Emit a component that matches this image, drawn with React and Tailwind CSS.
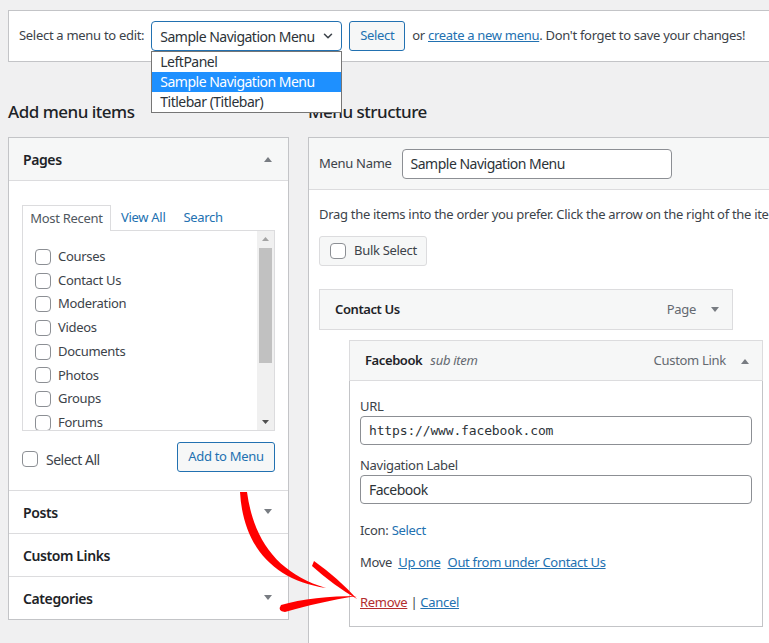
import React from "react";

const Tri = ({ up = false, className = "" }) => (
  <svg width="10" height="6" viewBox="0 0 10 6" className={className}>
    {up ? <polygon points="1,6 9,6 5,1" fill="#787c82" /> : <polygon points="1,0 9,0 5,5" fill="#787c82" />}
  </svg>
);

const Box = ({ className = "" }) => (
  <span className={"inline-block w-4 h-4 rounded-[4px] border border-[#8c8f94] bg-white shrink-0 " + className} />
);

const pages = ["Courses", "Contact Us", "Moderation", "Videos", "Documents", "Photos", "Groups", "Forums"];

export default function App() {
  return (
    <div className="relative w-[769px] h-[643px] overflow-hidden bg-[#f0f0f1] pt-[10px] pl-[8px] text-[13px] tracking-[-0.3px] text-[#3c434a] font-['Noto_Sans',sans-serif]">
      {/* top bar */}
      <div className="relative w-[900px] h-[52px] bg-white border border-[#c3c4c7] flex items-center pl-[10px] text-[13px]">
        <span className="mr-[7px]">Select a menu to edit:</span>
        <div className="relative">
          <div className="w-[191px] h-[30px] border border-[#2271b1] rounded-[4px] flex items-center pl-[8px] pr-[6px] justify-between text-[14px] tracking-[-0.5px] text-[#2c3338] whitespace-nowrap">
            <span>Sample Navigation Menu</span>
            <svg width="14" height="14" viewBox="0 0 24 24" fill="none" stroke="#3c434a" strokeWidth="2.6" strokeLinecap="round" strokeLinejoin="round"><path d="m6 9 6 6 6-6" /></svg>
          </div>
          <div className="absolute left-0 top-[30px] w-[191px] bg-white border border-[#767676] z-10 text-[14px] tracking-[-0.5px] text-[#2c3338] leading-[20px] whitespace-nowrap">
            <div className="pl-[8px] h-[20px]">LeftPanel</div>
            <div className="pl-[8px] h-[20px] bg-[#1e90ff] text-white">Sample Navigation Menu</div>
            <div className="pl-[8px] h-[20px]">Titlebar (Titlebar)</div>
          </div>
        </div>
        <div className="ml-[7px] h-[30px] w-[56px] border border-[#2271b1] rounded-[3px] bg-[#f6f7f7] text-[#2271b1] flex items-center justify-center">Select</div>
        <span className="ml-[7px] whitespace-nowrap">or <span className="text-[#2271b1] underline">create a new menu</span>. Don't forget to save your changes!</span>
      </div>

      <div className="flex gap-[19px]">
        {/* left column */}
        <div className="w-[281px] shrink-0">
          <h2 className="pt-[38px] mb-[13px] leading-[24px] text-[17px] tracking-[-0.5px] font-medium text-[#1d2327]">Add menu items</h2>
          <div className="bg-white border border-[#c3c4c7]">
            <div className="h-[43px] bg-[#f6f7f7] border-b border-[#dcdcde] flex items-center justify-between pl-[14px] pr-[15px]">
              <span className="text-[14px] tracking-[-0.4px] font-semibold text-[#1d2327]">Pages</span>
              <Tri up />
            </div>
            <div className="pt-[24px] px-[13px] pb-[18px]">
              <div className="flex items-end text-[13px]">
                <div className="relative z-[1] h-[26px] w-[89px] border border-b-0 border-[#dcdcde] bg-white flex items-center justify-center text-[#50575e]">Most Recent</div>
                <span className="ml-[10px] h-[26px] flex items-center text-[#2271b1]">View All</span>
                <span className="ml-[18px] h-[26px] flex items-center text-[#2271b1]">Search</span>
              </div>
              <div className="-mt-px h-[201px] w-[253px] border border-[#dcdcde] flex overflow-hidden">
                <div className="flex-1 pt-[14px] pl-[12px]">
                  {pages.map((p) => (
                    <div key={p} className="h-[23.7px] flex items-center gap-[7px]">
                      <Box />
                      <span>{p}</span>
                    </div>
                  ))}
                </div>
                <div className="w-[17px] bg-[#f0f0f0] flex flex-col items-center">
                  <svg width="17" height="17" viewBox="0 0 17 17"><polygon points="5,10 12,10 8.5,6" fill="#a3a3a3" /></svg>
                  <div className="w-[13px] h-[115px] bg-[#c1c1c1]" />
                  <div className="flex-1" />
                  <svg width="17" height="17" viewBox="0 0 17 17"><polygon points="5,7 12,7 8.5,11" fill="#505050" /></svg>
                </div>
              </div>
              <div className="mt-[11px] h-[30px] flex items-center justify-between">
                <div className="flex items-center gap-[8px] mt-[4px]">
                  <Box />
                  <span className="text-[14px] tracking-[-0.5px]">Select All</span>
                </div>
                <div className="h-[30px] w-[98px] border border-[#2271b1] rounded-[3px] bg-[#f6f7f7] text-[#2271b1] flex items-center justify-center">Add to Menu</div>
              </div>
            </div>
            {["Posts", "Custom Links", "Categories"].map((t, i) => (
              <div key={t} className={"h-[43px] border-t border-[#dcdcde] flex items-center justify-between pl-[14px] pr-[15px]"}>
                <span className="text-[14px] tracking-[-0.4px] font-semibold text-[#1d2327]">{t}</span>
                {i !== 1 && <Tri />}
              </div>
            ))}
          </div>
        </div>

        {/* right column */}
        <div className="w-[520px] shrink-0">
          <h2 className="pt-[38px] mb-[13px] leading-[24px] text-[17px] tracking-[-0.5px] font-medium text-[#1d2327]">Menu structure</h2>
          <div className="bg-white border border-[#c3c4c7] h-[600px]">
            <div className="h-[52px] bg-[#f6f7f7] border-b border-[#dcdcde] flex items-center pl-[10px]">
              <span className="mr-[10px] mt-[1px]">Menu Name</span>
              <div className="w-[270px] h-[30px] border border-[#8c8f94] rounded-[4px] bg-white flex items-center pl-[8px] text-[14px] tracking-[-0.5px] text-[#2c3338]">Sample Navigation Menu</div>
            </div>
            <div className="pl-[10px] pt-[14px]">
              <p className="leading-[20px] whitespace-nowrap">Drag the items into the order you prefer. Click the arrow on the right of the item to reveal additional configuration options.</p>
              <div className="mt-[12px] w-[108px] h-[30px] bg-[#f6f7f7] border border-[#dcdcde] rounded-[3px] flex items-center pl-[10px] gap-[8px]">
                <Box />
                <span>Bulk Select</span>
              </div>
              <div className="mt-[23px] w-[414px] h-[41px] bg-[#f6f7f7] border border-[#dcdcde] flex items-center justify-between pl-[15px] pr-[12px]">
                <span className="font-semibold tracking-[-0.4px] text-[#1d2327]">Contact Us</span>
                <span className="flex items-center gap-[14px] text-[#646970]">Page<Tri /></span>
              </div>
              <div className="mt-[10px] ml-[30px] w-[414px]">
                <div className="h-[41px] bg-[#f6f7f7] border border-[#dcdcde] flex items-center justify-between pl-[15px] pr-[12px]">
                  <span><span className="font-semibold tracking-[-0.4px] text-[#1d2327]">Facebook</span><span className="ml-[8px] italic text-[#646970]">sub item</span></span>
                  <span className="flex items-center gap-[14px] text-[#646970]">Custom Link<Tri up /></span>
                </div>
                <div className="h-[246px] border border-t-0 border-[#c3c4c7] px-[10px] pt-[15px]">
                  <div className="leading-[20px]">URL</div>
                  <div className="h-[29px] border border-[#8c8f94] rounded-[4px] flex items-center pl-[8px] font-['DejaVu_Sans_Mono',monospace] text-[13px] tracking-[-0.15px] text-[#2c3338]">https://www.facebook.com</div>
                  <div className="mt-[10px] leading-[20px]">Navigation Label</div>
                  <div className="h-[29px] border border-[#8c8f94] rounded-[4px] flex items-center pl-[8px] text-[14px] tracking-[-0.5px] text-[#2c3338]">Facebook</div>
                  <div className="mt-[16px] leading-[20px]">Icon: <span className="text-[#2271b1]">Select</span></div>
                  <div className="mt-[12px] leading-[20px]">Move <span className="ml-[3px] text-[#2271b1] underline">Up one</span><span className="ml-[7px] text-[#2271b1] underline">Out from under Contact Us</span></div>
                  <div className="mt-[20px] leading-[20px]"><span className="text-[#b32d2e] underline">Remove</span> | <span className="text-[#2271b1] underline">Cancel</span></div>
                </div>
              </div>
            </div>
          </div>
        </div>
      </div>

      {/* red hand-drawn arrow */}
      <svg className="absolute left-0 top-0 pointer-events-none" width="769" height="643" viewBox="0 0 769 643">
        <path d="M240,492 C243,545 272,580 326,588 C280,574 254,543 247,492 Z" fill="#ff0000" />
        <path d="M314,561 Q338,578 357,599 Q333,585 312,566 Z" fill="#ff0000" />
        <path d="M281,605 C301,599 330,596 357,596 C331,600 306,606 285,612 Q277,611 281,605 Z" fill="#ff0000" />
      </svg>
    </div>
  );
}
